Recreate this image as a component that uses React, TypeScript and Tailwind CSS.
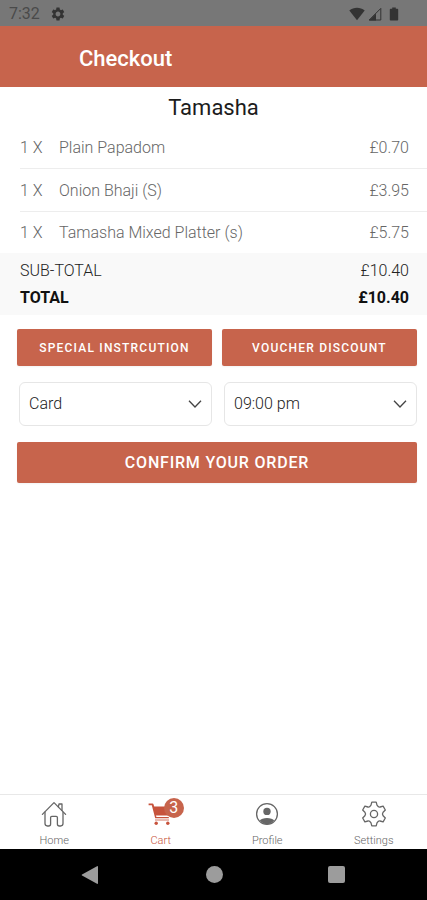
import { useState } from 'react'
import { MdSettings } from 'react-icons/md'

const items = [
  { qty: 1, name: 'Plain Papadom', price: 0.7 },
  { qty: 1, name: 'Onion Bhaji (S)', price: 3.95 },
  { qty: 1, name: 'Tamasha Mixed Platter (s)', price: 5.75 },
]

const formatPrice = (value: number) => `£${value.toFixed(2)}`

function StatusBar() {
  return (
    <div className="h-[26px] shrink-0 bg-[#777777] text-[#333333] flex items-center justify-between pl-[9px] pr-7 pt-px">
      <div className="flex items-center gap-[10px]">
        <span className="text-base leading-5 text-[#4a4a4a]">7:32</span>
        <MdSettings className="w-4 h-4" />
      </div>
      <div className="flex items-center gap-[3px]">
        <svg viewBox="0 0 16 14" className="w-4 h-3.5" fill="currentColor">
          <path d="M0.3 3.6C4.8 -0.2 11.2 -0.2 15.7 3.6L8 13.2Z" />
        </svg>
        <svg viewBox="0 0 14 14" className="w-3.5 h-3.5">
          <path d="M1.2 13H12.8V1.4Z" fill="none" stroke="currentColor" strokeWidth="1" />
          <path d="M1 13.4L8 6.4V13.4Z" fill="currentColor" />
        </svg>
        <svg viewBox="0 0 10 14" className="w-2.5 h-3.5 ml-1" fill="currentColor">
          <path d="M3.2 0.4H6.8V1.8H8.4Q9.2 1.8 9.2 2.6V12.8Q9.2 13.6 8.4 13.6H1.6Q0.8 13.6 0.8 12.8V2.6Q0.8 1.8 1.6 1.8H3.2Z" />
        </svg>
      </div>
    </div>
  )
}

function HomeIcon() {
  return (
    <svg viewBox="0 0 26 26" className="w-[26px] h-[26px]" fill="none" stroke="currentColor" strokeWidth="1.3" strokeLinejoin="round" strokeLinecap="round">
      <path d="M1.4 13.4L13 1.6L24.6 13.4" />
      <path d="M4 11.2V22.6Q4 25 6.4 25H7.6Q9.6 25 9.6 23V16.6Q9.6 15.4 10.8 15.4H15.2Q16.4 15.4 16.4 16.6V23Q16.4 25 18.4 25H19.6Q22 25 22 22.6V11.2" />
      <path d="M17.4 5.8L18 3H21V9.4" />
    </svg>
  )
}

function CartIcon() {
  return (
    <svg viewBox="0 0 26 24" className="w-[26px] h-6" fill="currentColor">
      <path d="M0.6 1.4H4.6Q5.2 1.4 5.4 2L6.2 4.4H24.4L21.4 13.4H8L8.4 15H20.8V16.2H7.2L3.8 3.2H0.6Z" />
      <path d="M7 17.6H21V18.4H7Z" />
      <circle cx="8.2" cy="21.2" r="1.7" />
      <circle cx="19.8" cy="21.2" r="1.7" />
    </svg>
  )
}

function ProfileIcon() {
  return (
    <svg viewBox="0 0 24 24" className="w-6 h-6">
      <circle cx="12" cy="12" r="10.4" fill="none" stroke="currentColor" strokeWidth="1.3" />
      <circle cx="12" cy="9.4" r="3.7" fill="currentColor" />
      <path d="M4.8 18.6C6.6 15.2 17.4 15.2 19.2 18.6C15.6 23.4 8.4 23.4 4.8 18.6Z" fill="currentColor" />
    </svg>
  )
}

function SettingsIcon() {
  return (
    <svg viewBox="0 0 26 26" className="w-[26px] h-[26px]" fill="none" stroke="currentColor" strokeWidth="1.3" strokeLinejoin="round">
      <path d="M10 4.2L10.8 1.2H15.2L16 4.2Q17.6 6.6 19.12 6L22.12 5.2L24.32 9L22.12 11.2Q20.8 13 22.12 14.8L24.32 17L22.12 20.8L19.12 20Q17.6 19.4 16 21.8L15.2 24.8H10.8L10 21.8Q8.4 19.4 6.88 20L3.88 20.8L1.68 17L3.88 14.8Q5.2 13 3.88 11.2L1.68 9L3.88 5.2L6.88 6Q8.4 6.6 10 4.2Z" />
      <circle cx="13" cy="13" r="3.6" />
    </svg>
  )
}

function SelectField({ label, value, options, onChange }: {
  label: string
  value: string
  options: string[]
  onChange: (value: string) => void
}) {
  return (
    <div className="relative flex-1">
      <select
        aria-label={label}
        value={value}
        onChange={(e) => onChange(e.target.value)}
        className="w-full h-11 appearance-none rounded-md border border-[#e6e6e6] bg-white pl-[9px] pr-9 text-base font-light text-[#222222]"
      >
        {options.map((option) => (
          <option key={option}>{option}</option>
        ))}
      </select>
      <svg viewBox="0 0 14 8" className="absolute right-[10px] top-[18px] w-3.5 h-2 pointer-events-none" fill="none" stroke="#444444" strokeWidth="1.3">
        <path d="M1 0.8L7 7L13 0.8" />
      </svg>
    </div>
  )
}

function TabBar() {
  const tabs = [
    { label: 'Home', icon: <HomeIcon /> },
    { label: 'Cart', icon: <CartIcon />, badge: items.length },
    { label: 'Profile', icon: <ProfileIcon /> },
    { label: 'Settings', icon: <SettingsIcon /> },
  ]

  return (
    <nav className="mt-auto flex border-t border-[#e8e8e8] h-[55px] pl-px">
      {tabs.map((tab) => (
        <a
          key={tab.label}
          href={`#${tab.label.toLowerCase()}`}
          className={`flex-1 flex flex-col items-center pt-1 ${tab.badge ? 'text-[#c7533c]' : 'text-[#666666]'}`}
        >
          <span className="relative h-8 flex items-center">
            {tab.icon}
            {tab.badge && (
              <span className="absolute left-4 -top-px w-5 h-5 rounded-full bg-[#c7644c] text-white text-base leading-5 text-center">
                {tab.badge}
              </span>
            )}
          </span>
          <span className="mt-1 text-[11px] leading-4 font-light">{tab.label}</span>
        </a>
      ))}
    </nav>
  )
}

export default function App() {
  const [payment, setPayment] = useState('Card')
  const [time, setTime] = useState('09:00 pm')

  const total = items.reduce((sum, item) => sum + item.price * item.qty, 0)

  return (
    <div className="min-h-screen bg-white flex flex-col font-[Roboto,sans-serif]">
      <StatusBar />

      {/* Header */}
      <header className="h-[61px] shrink-0 bg-[#c7644c] flex items-center pl-[79px] pt-1">
        <h1 className="text-[22px] leading-7 font-medium text-white">Checkout</h1>
      </header>

      <main>
        <h2 className="pt-[3px] text-[22px] leading-9 text-center text-[#1c1c1c]">Tamasha</h2>

        {/* Order items */}
        <ul className="pl-5 text-base font-light text-[#666666]">
          {items.map((item) => (
            <li key={item.name} className="h-[43px] flex items-center pt-px pr-[18px] border-b border-[#ededed] last:border-0 last:h-[41px]">
              <span className="w-[39px]">{item.qty} X</span>
              <span className="flex-1">{item.name}</span>
              <span>{formatPrice(item.price)}</span>
            </li>
          ))}
        </ul>

        <div className="bg-[#f9f9f9] pl-5 pr-[18px] pt-1 pb-1 text-base leading-[27px]">
          <div className="flex justify-between font-light text-[#222222]">
            <span>SUB-TOTAL</span>
            <span>{formatPrice(total)}</span>
          </div>
          <div className="flex justify-between font-bold text-[#111111]">
            <span>TOTAL</span>
            <span>{formatPrice(total)}</span>
          </div>
        </div>

        {/* Actions */}
        <div className="pl-[17px] pr-[10px] pt-[14px]">
          <div className="flex gap-[10px]">
            <button className="flex-1 h-[37px] rounded-xs bg-[#c7644c] text-white text-xs font-medium tracking-widest shadow-xs">
              SPECIAL INSTRCUTION
            </button>
            <button className="flex-1 h-[37px] rounded-xs bg-[#c7644c] text-white text-xs font-medium tracking-widest shadow-xs">
              VOUCHER DISCOUNT
            </button>
          </div>
          <div className="flex gap-3 pl-[2px] mt-4">
            <SelectField label="Payment method" value={payment} options={['Card', 'Cash']} onChange={setPayment} />
            <SelectField label="Collection time" value={time} options={['09:00 pm', '09:15 pm', '09:30 pm']} onChange={setTime} />
          </div>
          <button className="mt-4 w-full h-[41px] rounded-xs bg-[#c7644c] text-white text-base font-medium tracking-wider shadow-xs">
            CONFIRM YOUR ORDER
          </button>
        </div>
      </main>

      <TabBar />

      {/* System navigation */}
      <div className="h-[51px] shrink-0 bg-black text-[#9c9c9c] flex items-center justify-between pl-20 pr-[82px]">
        <button aria-label="Back">
          <svg viewBox="0 0 20 20" className="w-5 h-5" fill="currentColor">
            <path d="M17 1.2Q18 0.8 18 2V18Q18 19.2 17 18.8L2 10.6Q1.2 10 2 9.4Z" />
          </svg>
        </button>
        <button aria-label="Home screen" className="w-[17px] h-[17px] rounded-full bg-current" />
        <button aria-label="Recent apps" className="w-[17px] h-[17px] rounded-xs bg-current" />
      </div>
    </div>
  )
}
